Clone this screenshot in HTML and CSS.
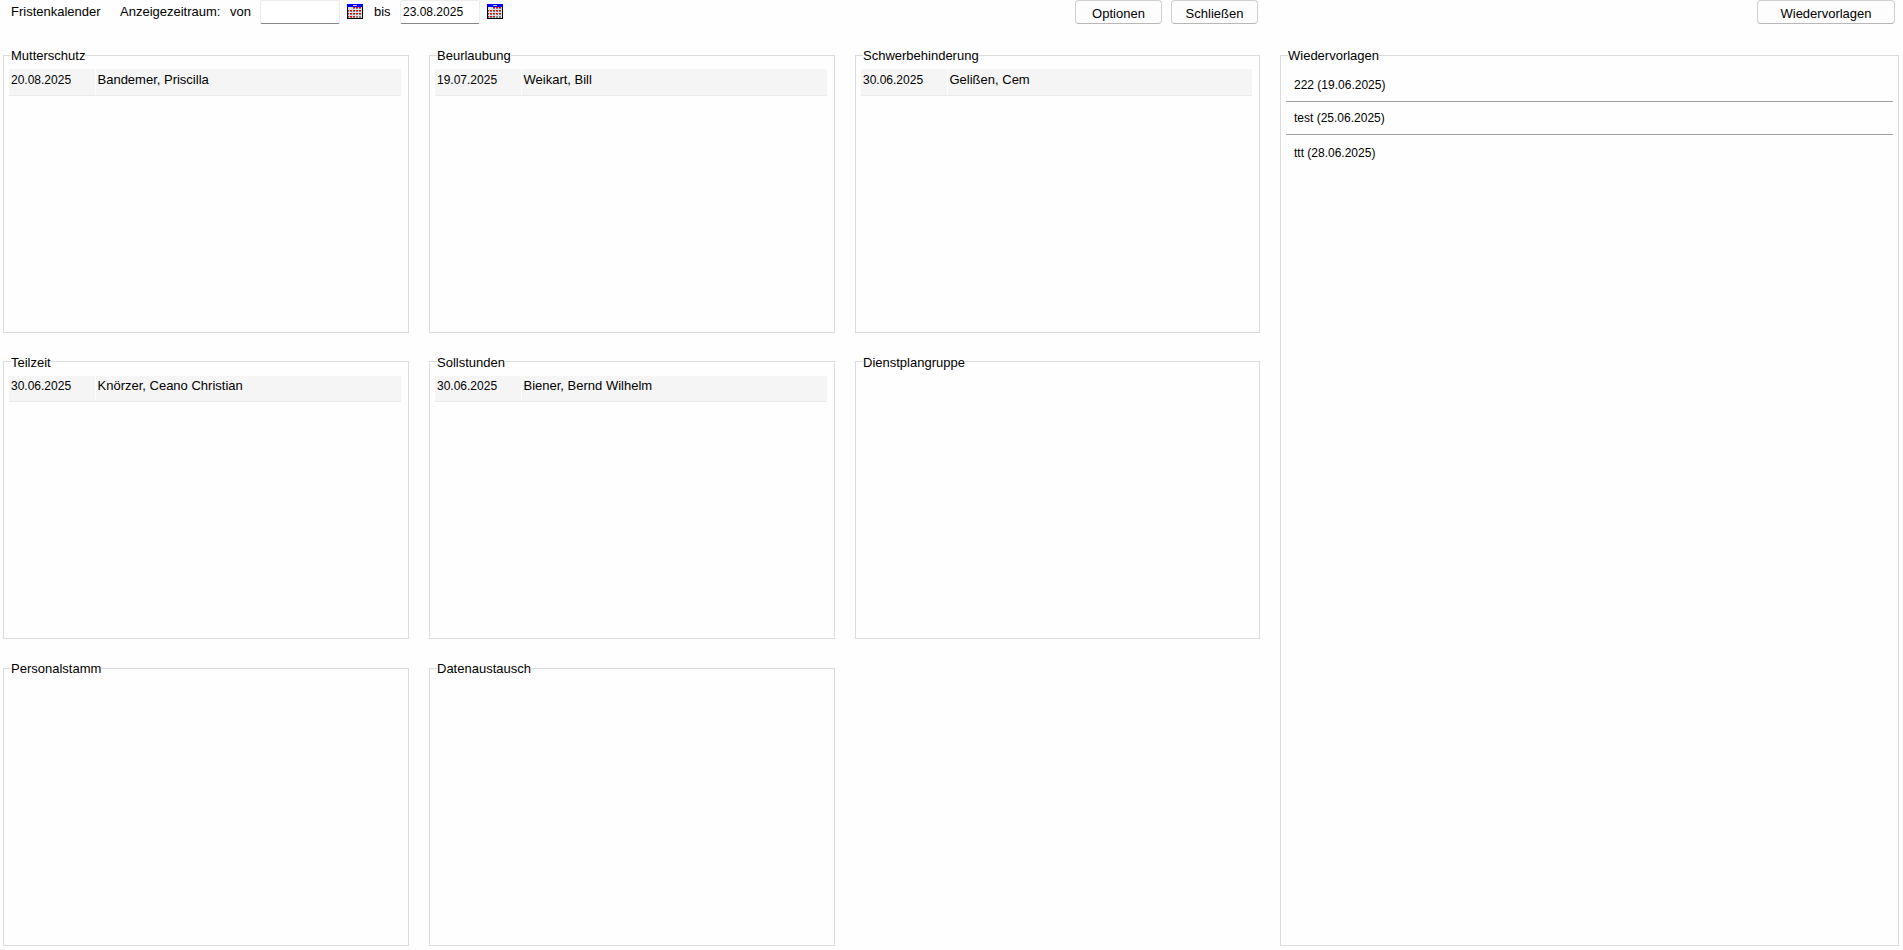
FILE: index.html
```
<!DOCTYPE html>
<html lang="de">
	<head>
		<meta charset="utf-8" />
		<title>Fristenkalender</title>
		<link rel="stylesheet" href="styles.css">
	</head>
	<body>
		<!-- Kalendersymbol, wird zweimal verwendet -->
		<svg class="defs" width="0" height="0" aria-hidden="true">
			<symbol id="cal" viewBox="0 0 16 15" shape-rendering="crispEdges">
				<rect width="16" height="15" fill="#000"/>
				<rect x="1" y="3" width="14" height="11" fill="#e0e0e0"/>
				<rect width="16" height="3" fill="#00f"/>
				<rect x="6" y="1" width="4" height="1" fill="#c0c0c0"/>
				<path fill="#808080" d="M6 3h2v2h-2zM9 3h2v2h-2zM12 3h2v2h-2zM1 6h1v2h-1zM3 6h2v2h-2zM6 6h2v2h-2zM9 6h2v2h-2zM12 6h2v2h-2zM1 9h1v2h-1zM3 9h2v2h-2zM6 9h2v2h-2zM9 9h2v2h-2zM12 9h2v2h-2zM1 12h1v2h-1zM3 12h2v2h-2zM6 12h2v2h-2zM9 12h2v2h-2zM12 12h2v2h-2z"/>
				<path fill="#f00" d="M6 3h2v1h-2zM9 3h2v1h-2zM12 3h2v1h-2zM1 6h1v1h-1zM3 6h2v1h-2zM6 6h2v1h-2zM9 6h2v1h-2zM12 6h2v1h-2zM1 9h1v1h-1zM3 9h2v1h-2zM6 9h2v1h-2zM9 9h2v1h-2zM12 9h2v1h-2zM1 12h1v1h-1zM3 12h2v1h-2zM6 12h2v1h-2z"/>
			</symbol>
		</svg>
		<div class="page">
			<main class="left">
				<header class="bar">
					<span class="title">Fristenkalender</span>
					<span class="range">Anzeigezeitraum:</span>
					<label class="von" for="von">von</label>
					<input class="date" type="text" id="von" value="">
					<button class="pick" type="button" aria-label="Datum von"><svg width="16" height="15"><use href="#cal"/></svg></button>
					<label class="bis" for="bis">bis</label>
					<input class="date" type="text" id="bis" value="23.08.2025">
					<button class="pick" type="button" aria-label="Datum bis"><svg width="16" height="15"><use href="#cal"/></svg></button>
					<div class="actions">
						<button class="btn" type="button">Optionen</button>
						<button class="btn" type="button">Schließen</button>
					</div>
				</header>
				<div class="boxes">
					<fieldset class="box">
						<legend>Mutterschutz</legend>
						<table class="list">
							<tr><td class="day">20.08.2025</td><td>Bandemer, Priscilla</td></tr>
						</table>
					</fieldset>
					<fieldset class="box">
						<legend>Beurlaubung</legend>
						<table class="list">
							<tr><td class="day">19.07.2025</td><td>Weikart, Bill</td></tr>
						</table>
					</fieldset>
					<fieldset class="box">
						<legend>Schwerbehinderung</legend>
						<table class="list">
							<tr><td class="day">30.06.2025</td><td>Gelißen, Cem</td></tr>
						</table>
					</fieldset>
					<fieldset class="box">
						<legend>Teilzeit</legend>
						<table class="list">
							<tr><td class="day">30.06.2025</td><td>Knörzer, Ceano Christian</td></tr>
						</table>
					</fieldset>
					<fieldset class="box">
						<legend>Sollstunden</legend>
						<table class="list">
							<tr><td class="day">30.06.2025</td><td>Biener, Bernd Wilhelm</td></tr>
						</table>
					</fieldset>
					<fieldset class="box">
						<legend>Dienstplangruppe</legend>
					</fieldset>
					<fieldset class="box">
						<legend>Personalstamm</legend>
					</fieldset>
					<fieldset class="box">
						<legend>Datenaustausch</legend>
					</fieldset>
				</div>
			</main>
			<aside class="right">
				<header class="bar">
					<div class="actions">
						<button class="btn wide" type="button">Wiedervorlagen</button>
					</div>
				</header>
				<fieldset class="box">
					<legend>Wiedervorlagen</legend>
					<ul class="notes">
						<li>222 (19.06.2025)</li>
						<li>test (25.06.2025)</li>
						<li>ttt (28.06.2025)</li>
					</ul>
				</fieldset>
			</aside>
		</div>
	</body>
</html>
```
FILE: styles.css
```
*{
	margin: 0;
	padding: 0;
	box-sizing: border-box;
}
body{
	background-color: #fefefe;
	color: #000;
	font: 13px/18px "Liberation Sans", Arial, sans-serif;
}
.defs{
	position: absolute;
}
.page{
	display: grid;
	grid-template-columns: 1257fr 619fr;
	gap: 20px;
	min-height: 100vh;
	padding: 0 4px 4px 3px;
}
.left, .right{
	display: flex;
	flex-direction: column;
}
/* Kopfzeile */
.bar{
	display: flex;
	align-items: center;
	height: 24px;
	margin-bottom: 22px;
}
.title{
	margin-left: 8px;
	width: 109px;
}
.range{
	width: 110px;
}
.von{
	width: 30px;
}
.bis{
	width: 26px;
	margin-left: 11px;
}
.date{
	width: 80px;
	height: 24px;
	padding: 0 2px;
	border: 1px solid #ececec;
	border-bottom-color: #868686;
	border-radius: 2px;
	background-color: #fff;
	color: #000;
	font: 12px "Liberation Sans", Arial, sans-serif;
}
.pick{
	display: flex;
	height: 16px;
	margin-left: 7px;
	border: 0;
	background: none;
	align-items: flex-start;
}
.actions{
	display: flex;
	gap: 9px;
	margin-left: auto;
	padding-right: 2px;
}
.btn{
	width: 87px;
	height: 24px;
	padding-top: 2px;
	border: 1px solid #d0d0d0;
	border-bottom-color: #b8b8b8;
	border-radius: 4px;
	background-color: #fdfdfd;
	color: #000;
	font: 13px "Liberation Sans", Arial, sans-serif;
}
.right .actions{
	padding-right: 4px;
}
.wide{
	width: 138px;
}
/* Rahmen */
.boxes{
	flex: 1;
	display: grid;
	grid-template-columns: 406fr 406fr 405fr;
	grid-template-rows: repeat(3, 1fr);
	gap: 20px;
}
.box{
	min-width: 0;
	padding: 5px 7px 0 5px;
	border: 1px solid #dcdcdc;
}
.box legend{
	margin-left: 2px;
	padding-top: 2px;
	line-height: 16px;
}
.right .box{
	flex: 1;
	padding-right: 5px;
}
.list{
	width: 100%;
	border-collapse: collapse;
}
.list td{
	height: 26px;
	padding: 0 2px 4px;
	border-bottom: 1px solid #ebebeb;
	background-color: #f5f5f5;
}
.list .day{
	width: 86px;
	border-right: 1px solid #fefefe;
	font-size: 12px;
}
.notes{
	list-style: none;
	font-size: 12px;
}
.notes li{
	height: 33px;
	padding: 7px 8px;
	border-bottom: 1px solid #a0a0a0;
}
.notes li:last-child{
	padding-top: 9px;
	border-bottom: 0;
}
```
